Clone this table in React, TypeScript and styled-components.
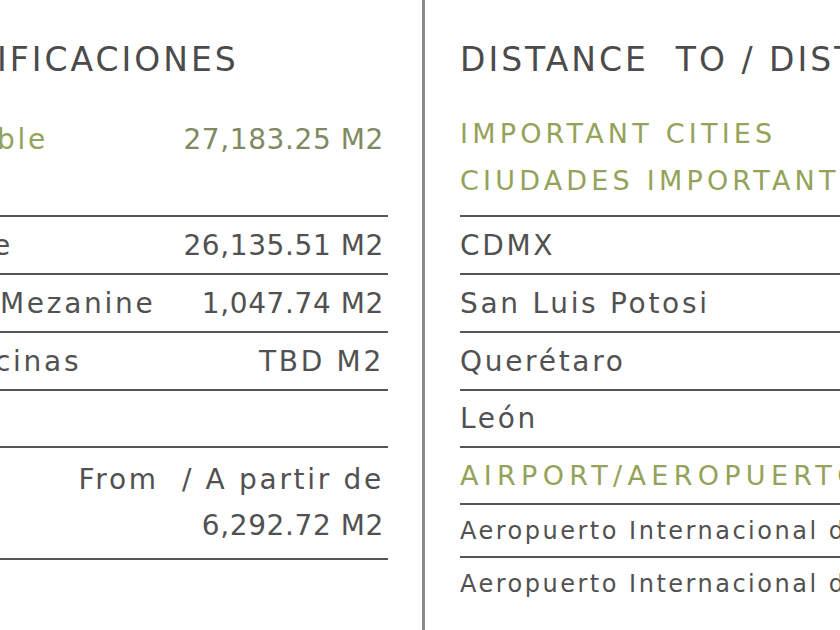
import React from "react";
import styled, { createGlobalStyle } from "styled-components";

const Global = createGlobalStyle`
  html, body { margin: 0; padding: 0; background: #ffffff; }
  body { width: 840px; height: 630px; overflow: hidden; }
  #root { width: 840px; height: 630px; }
`;

const GRAY = "#515151";
const GREEN = "#94a359";
const RULE = "#555555";

const Page = styled.div`
  display: flex;
  width: 840px;
  height: 630px;
  overflow: hidden;
  background: #fff;
  font-family: "DejaVu Sans", "Liberation Sans", sans-serif;
  color: ${GRAY};
`;

const LeftPanel = styled.section`
  width: 388px;
  flex: none;
  display: flex;
  flex-direction: column;
  overflow: hidden;
`;

const Divider = styled.div`
  width: 3px;
  flex: none;
  margin-left: 34px;
  background: #8a8a8a;
`;

const RightPanel = styled.section`
  flex: 1;
  min-width: 0;
  margin-left: 35px;
  display: flex;
  flex-direction: column;
  overflow: hidden;
  white-space: pre;
`;

const Header = styled.div`
  height: 215px;
  flex: none;
  display: flex;
  flex-direction: column;
`;

const Title = styled.h2<{ $indent?: number }>`
  margin: 38px 0 0 0;
  height: 44px;
  line-height: 44px;
  font-size: 33px;
  font-weight: 400;
  letter-spacing: 3px;
  text-indent: ${(p) => p.$indent ?? 0}px;
  color: #4b4b4b;
  white-space: pre;
`;

const GreenBlock = styled.div<{ $top: number }>`
  margin-top: ${(p) => p.$top}px;
  display: flex;
  flex-direction: column;
`;

const GreenLine = styled.div`
  height: 47px;
  line-height: 47px;
  font-size: 27px;
  letter-spacing: 4.2px;
  color: ${GREEN};
`;

const Row = styled.div<{ $h: number; $small?: boolean; $green?: boolean }>`
  box-sizing: border-box;
  height: ${(p) => p.$h}px;
  flex: none;
  border-top: 2px solid ${RULE};
  display: flex;
  align-items: center;
  justify-content: space-between;
  font-size: ${(p) => (p.$small ? 24 : p.$green ? 27 : 28)}px;
  letter-spacing: ${(p) => (p.$small ? 2.5 : p.$green ? 5.3 : 2.7)}px;
  color: ${(p) => (p.$green ? GREEN : GRAY)};
  white-space: pre;
`;

const TopRow = styled.div`
  height: 47px;
  display: flex;
  align-items: center;
  justify-content: space-between;
  font-size: 28px;
  letter-spacing: 2.7px;
  white-space: pre;
`;

const Label = styled.span<{ $cut?: number; $green?: boolean }>`
  margin-left: ${(p) => -(p.$cut ?? 0)}px;
  color: ${(p) => (p.$green ? GREEN : "inherit")};
`;

const Value = styled.span<{ $tone?: string; $numeric?: boolean }>`
  padding-right: 4px;
  text-align: right;
  letter-spacing: ${(p) => (p.$numeric ? "0.6px" : "inherit")};
  color: ${(p) => p.$tone ?? "inherit"};
`;

const Stack = styled.div`
  display: flex;
  flex-direction: column;
  align-items: flex-end;
  line-height: 46px;
`;

export default function App() {
  return (
    <>
      <Global />
      <Page>
        <LeftPanel>
          <Header>
            <Title $indent={-3}>IFICACIONES</Title>
            <GreenBlock $top={34}>
              <TopRow>
                <Label $cut={3} $green>ble</Label>
                <Value $numeric $tone="#7f8a62">27,183.25 M2</Value>
              </TopRow>
            </GreenBlock>
          </Header>
          <Row $h={58}>
            <Label $cut={7}>e</Label>
            <Value $numeric>26,135.51 M2</Value>
          </Row>
          <Row $h={58}>
            <Label $cut={0}>Mezanine</Label>
            <Value $numeric>1,047.74 M2</Value>
          </Row>
          <Row $h={58}>
            <Label $cut={5}>cinas</Label>
            <Value>TBD M2</Value>
          </Row>
          <Row $h={57} />
          <Row $h={112}>
            <span />
            <Stack>
              <Value>{"From  / A partir de"}</Value>
              <Value $numeric>6,292.72 M2</Value>
            </Stack>
          </Row>
          <Row $h={71} />
        </LeftPanel>
        <Divider />
        <RightPanel>
          <Header>
            <Title>{"DISTANCE  TO / DISTANCIA A"}</Title>
            <GreenBlock $top={28}>
              <GreenLine>IMPORTANT CITIES</GreenLine>
              <GreenLine>CIUDADES IMPORTANTES</GreenLine>
            </GreenBlock>
          </Header>
          <Row $h={58}>CDMX</Row>
          <Row $h={58}>San Luis Potosi</Row>
          <Row $h={58}>Querétaro</Row>
          <Row $h={57}>León</Row>
          <Row $h={57} $green>AIRPORT/AEROPUERTO</Row>
          <Row $h={53} $small>Aeropuerto Internacional de Querétaro</Row>
          <Row $h={53} $small>Aeropuerto Internacional del Bajío</Row>
        </RightPanel>
      </Page>
    </>
  );
}
